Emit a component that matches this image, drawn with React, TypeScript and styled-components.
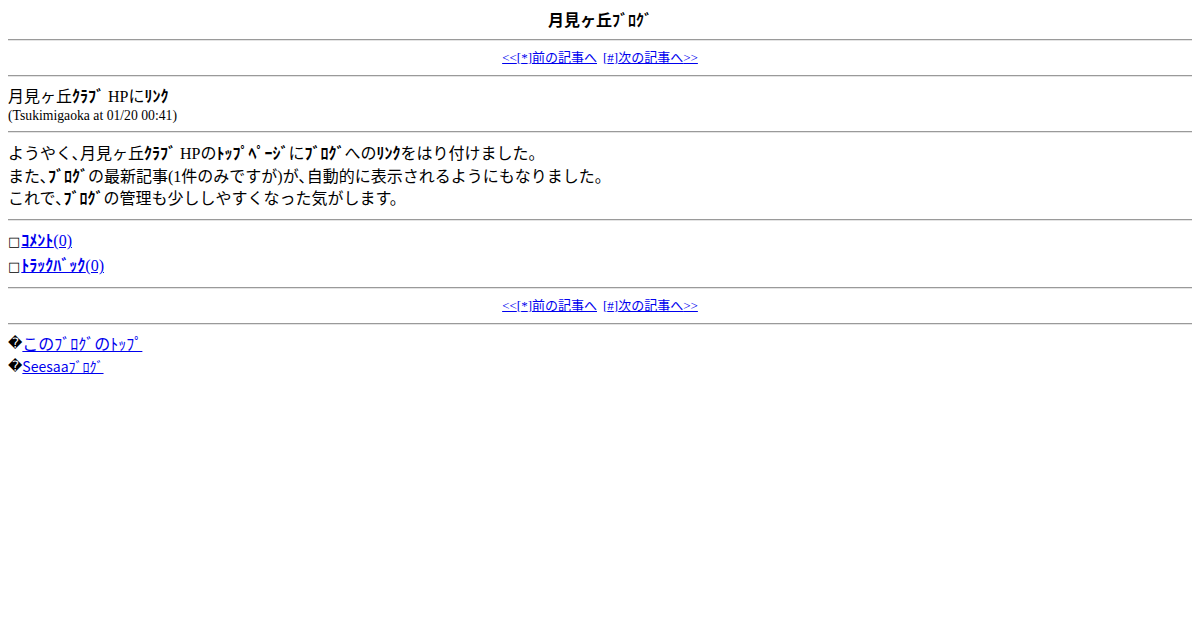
import React from 'react'
import styled, { createGlobalStyle } from 'styled-components'

const GlobalStyle = createGlobalStyle`
  body {
    margin: 8px;
    background: #ffffff;
    color: #000000;
    font-family: "Liberation Serif", "Noto Sans CJK JP", serif;
    font-size: 16px;
  }
`

const prevNext = [
  { key: '*', label: '前の記事へ', before: '<<', after: '' },
  { key: '#', label: '次の記事へ', before: '', after: '>>' },
]

export default function App() {
  return (
    <Page>
      <GlobalStyle />

      <BlogTitle>月見ヶ丘ﾌﾞﾛｸﾞ</BlogTitle>
      <Rule />

      <Pager items={prevNext} />
      <Rule />

      <PostHead>
        <PostTitle>
          月見ヶ丘<Hw>ｸﾗﾌﾞ</Hw> HPに<Hw>ﾘﾝｸ</Hw>
        </PostTitle>
        <PostDate>(Tsukimigaoka at 01/20 00:41)</PostDate>
      </PostHead>
      <Rule />

      <Body>
        <Line>
          ようやく､月見ヶ丘<Hw>ｸﾗﾌﾞ</Hw> HPの<Hw>ﾄｯﾌﾟﾍﾟｰｼﾞ</Hw>に<Hw>ﾌﾞﾛｸﾞ</Hw>への<Hw>ﾘﾝｸ</Hw>をはり付けました。
        </Line>
        <Line>
          また､<Hw>ﾌﾞﾛｸﾞ</Hw>の最新記事(1件のみですが)が､自動的に表示されるようにもなりました。
        </Line>
        <Line>
          これで､<Hw>ﾌﾞﾛｸﾞ</Hw>の管理も少ししやすくなった気がします。
        </Line>
      </Body>
      <Rule />

      <Meta>
        <MetaRow>
          <Mark>□</Mark>
          <Link href="#comment">
            <Hw>ｺﾒﾝﾄ</Hw>(0)
          </Link>
        </MetaRow>
        <MetaRow>
          <Mark>□</Mark>
          <Link href="#trackback">
            <Hw>ﾄﾗｯｸﾊﾞｯｸ</Hw>(0)
          </Link>
        </MetaRow>
      </Meta>
      <Rule />

      <Pager items={prevNext} />
      <Rule />

      <Footer>
        <FootRow>
          <Bullet>�</Bullet>
          <FootLink href="#top" $size={16}>
            このﾌﾞﾛｸﾞのﾄｯﾌﾟ
          </FootLink>
        </FootRow>
        <FootRow>
          <Bullet>�</Bullet>
          <FootLink href="#seesaa" $size={14}>
            Seesaaﾌﾞﾛｸﾞ
          </FootLink>
        </FootRow>
      </Footer>
    </Page>
  )
}

type PagerItem = { key: string; label: string; before: string; after: string }

const Pager: React.FC<{ items: PagerItem[] }> = ({ items }) => (
  <Nav>
    {items.map((item) => (
      <Link key={item.key} href={'#' + item.key}>
        {item.before}[{item.key}]{item.label}
        {item.after}
      </Link>
    ))}
  </Nav>
)

const Page = styled.div`
  display: flex;
  flex-direction: column;
`

const BlogTitle = styled.div`
  text-align: center;
  font-weight: bold;
  font-size: 16px;
  line-height: 23px;
  font-family: "Noto Sans CJK JP", sans-serif;
`

const Rule = styled.hr`
  margin: 8px 0;
  height: 0;
  border: none;
  border-top: 1px solid #9a9a9a;
  border-bottom: 1px solid #e4e4e4;
`

const Nav = styled.div`
  display: flex;
  justify-content: center;
  gap: 6px;
  font-size: 13px;
  line-height: 18px;
`

const Link = styled.a`
  color: #0000ee;
  text-decoration: underline;
`

/* half-width katakana runs, drawn heavier as in the old mobile fonts */
const Hw = styled.span`
  font-family: "Noto Sans CJK JP", sans-serif;
  font-weight: bold;
  line-height: 14px;
`

const PostHead = styled.div`
  display: flex;
  flex-direction: column;
`

const PostTitle = styled.div`
  font-size: 16px;
  line-height: 23px;
`

const PostDate = styled.div`
  font-size: 13.7px;
  line-height: 15px;
`

const Body = styled.div`
  display: flex;
  flex-direction: column;
  padding-top: 2px;
`

const Line = styled.div`
  font-size: 16px;
  line-height: 22.5px;
`

const Meta = styled.div`
  display: flex;
  flex-direction: column;
`

const MetaRow = styled.div`
  display: flex;
  align-items: center;
  height: 25px;
  font-size: 16px;
`

const Mark = styled.span`
  font-size: 13px;
  font-family: "DejaVu Sans", sans-serif;
  margin-right: 1px;
`

const Footer = styled.div`
  display: flex;
  flex-direction: column;
  margin-top: -1px;
`

const FootRow = styled.div`
  display: flex;
  align-items: center;
  height: 23px;
  font-size: 16px;
`

const Bullet = styled.span`
  font-family: "DejaVu Sans", sans-serif;
  font-size: 14px;
`

const FootLink = styled(Link)<{ $size: number }>`
  font-family: "Noto Sans CJK JP", sans-serif;
  font-size: ${(p) => p.$size}px;
`
